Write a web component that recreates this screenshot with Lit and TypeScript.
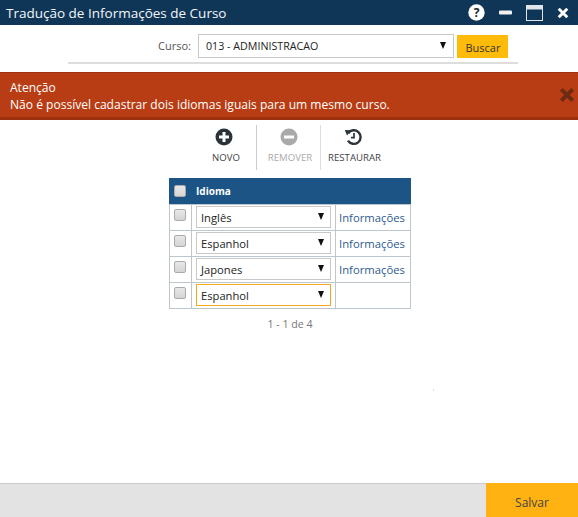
import { LitElement, html, css, svg } from "lit";
import { customElement } from "lit/decorators.js";

const FONT_ROWS = [
  { lang: "Inglês", info: true, focus: false },
  { lang: "Espanhol", info: true, focus: false },
  { lang: "Japones", info: true, focus: false },
  { lang: "Espanhol", info: false, focus: true },
];

@customElement("app-root")
export class AppRoot extends LitElement {
  static styles = css`
    :host { display: flex; flex-direction: column; width: 578px; height: 517px; background: #fff; font-family: "Open Sans", "Noto Sans", sans-serif; color: #333; overflow: hidden; }
    .title { height: 25px; flex: none; background: #0f3557; color: #fff; display: flex; align-items: center; padding: 0 9px 0 6px; box-sizing: border-box; }
    .title h1 { margin: 0; font-size: 13.5px; font-weight: 400; flex: 1; color: #f4f6f8; white-space: nowrap; }
    .winicons { display: flex; align-items: center; gap: 14px; }
    .winicons svg { display: block; }
    .form { flex: none; box-sizing: border-box; margin: 0 60px 0 68px; border-bottom: 2px solid #ddd; height: 39px; display: flex; align-items: flex-start; padding: 9px 0 0 90px; }
    .form label { font-size: 11px; color: #555; width: 40px; line-height: 23px; }
    .sel { box-sizing: border-box; border: 1px solid #c8c8c8; background: #fff; display: flex; align-items: center; justify-content: space-between; color: #222; }
    .course { width: 256px; height: 24px; padding: 0 7px 0 7px; font-size: 10.7px; }
    .arrow { width: 0; height: 0; border-left: 3.5px solid transparent; border-right: 3.5px solid transparent; border-top: 7px solid #111; flex: none; margin-top: -2px; }
    .buscar { margin-left: 3px; margin-top: 1px; width: 51px; height: 23px; padding: 2px 0 0 1px; box-sizing: border-box; background: #ffbb0a; font-size: 11px; color: #333; display: flex; align-items: center; justify-content: center; }
    .alert { margin-top: 8px; height: 48px; flex: none; box-sizing: border-box; background: #b83c14; border-top: 1px solid #9f3210; border-bottom: 3px solid #9c3110; color: #fff; padding: 6px 10px 0; font-size: 12.06px; line-height: 17px; display: flex; justify-content: space-between; }
    .alert svg { margin: 8px -7px 0 0; flex: none; }
    .toolbar { display: flex; height: 45px; margin-top: 5px; flex: none; padding-left: 193px; }
    .tool { display: flex; flex-direction: column; align-items: center; font-size: 9.6px; color: #444; gap: 5px; padding-top: 3px; box-sizing: border-box; white-space: nowrap; }
    .tool svg { display: block; }
    .tool.novo { width: 63px; }
    .tool.novo svg { margin-right: 1px; }
    .tool.novo span, .tool.rem span { margin-left: 3px; }
    .tool.rem { width: 65px; color: #aaa; border-left: 1px solid #ccc; border-right: 1px solid #ddd; }
    .tool.res { width: 67px; }
    .tool.res svg { margin-left: -3px; }
    .grid { align-self: center; margin-top: 8px; margin-left: 2px; width: 242px; flex: none; }
    .head { height: 26px; background: #1c5486; color: #fff; display: flex; align-items: center; font-size: 10px; font-weight: 700; padding-left: 5px; gap: 10px; }
    .cb { box-sizing: border-box; width: 12px; height: 12px; border: 1px solid #aaa; border-radius: 2px; background: linear-gradient(#e8e8e8, #d4d4d4); flex: none; }
    .row { display: grid; grid-template-columns: 22px 144px 1fr; height: 26px; box-sizing: border-box; border: 1px solid #bcc6cc; border-bottom: none; }
    .row:last-child { height: 27px; border-bottom: 1px solid #bcc6cc; }
    .row > div { display: flex; align-items: center; box-sizing: border-box; }
    .c1 { justify-content: center; padding: 0 1px 5px 0; border-right: 1px solid #bcc6cc; }
    .c2 { padding: 0 4px 1px; border-right: 1px solid #bcc6cc; }
    .lang { width: 135px; height: 22px; padding: 0 6px 0 4px; font-size: 11.2px; }
    .lang.focus { border-color: #f5a81c; }
    .c3 { font-size: 11.3px; color: #2e5b8e; padding-left: 3px; white-space: nowrap; }
    .pager { align-self: center; margin-top: 8px; font-size: 10.6px; color: #777; margin-left: 2px; flex: none; line-height: 14px; }
    .spacer { flex: 1; }
    .speck { width: 1px; height: 2px; background: #ddd; margin: 58px 0 0 433px; }
    .foot { height: 34px; flex: none; background: #e3e3e3; border-top: 1px solid #ccc; box-sizing: border-box; display: flex; justify-content: flex-end; }
    .salvar { width: 92px; margin-top: -1px; background: #ffb212; color: #444; font-size: 12px; display: flex; align-items: center; justify-content: center; padding-top: 4px; box-sizing: border-box; }
  `;

  private xIcon(size: number, color: string) {
    return svg`<svg width=${size} height=${size} viewBox="0 0 14 14"><path d="M2 2 L12 12 M12 2 L2 12" stroke=${color} stroke-width="3.4" fill="none"/></svg>`;
  }

  render() {
    return html`
      <div class="title">
        <h1>Tradução de Informações de Curso</h1>
        <div class="winicons">
          <svg width="17" height="17" viewBox="0 0 17 17"><circle cx="8.5" cy="8.5" r="8.2" fill="#fff"/><text x="8.5" y="13" text-anchor="middle" font-size="12" font-weight="700" font-family="Open Sans, sans-serif" fill="#222">?</text></svg>
          <svg width="13" height="5" viewBox="0 0 13 5"><rect y="0.5" width="13" height="4" rx="1" fill="#f2f2f2"/></svg>
          <svg width="17" height="16" viewBox="0 0 17 16"><rect x="0.5" y="0.5" width="16" height="15" fill="none" stroke="#dfe5ea"/><rect x="1" y="1" width="15" height="3.5" fill="#dfe5ea"/></svg>
          ${this.xIcon(12, "#fff")}
        </div>
      </div>
      <div class="form">
        <label>Curso:</label>
        <div class="sel course"><span>013 - ADMINISTRACAO</span><span class="arrow"></span></div>
        <div class="buscar">Buscar</div>
      </div>
      <div class="alert">
        <div>Atenção<br />Não é possível cadastrar dois idiomas iguais para um mesmo curso.</div>
        ${this.xIcon(16, "#6e2a12")}
      </div>
      <div class="toolbar">
        <div class="tool novo">
          <svg width="18" height="18" viewBox="0 0 18 18"><circle cx="9" cy="9" r="8.5" fill="#2b333a"/><path d="M9 4v10M4 9h10" stroke="#fff" stroke-width="3"/></svg>
          <span>NOVO</span>
        </div>
        <div class="tool rem">
          <svg width="18" height="18" viewBox="0 0 18 18"><circle cx="9" cy="9" r="8.5" fill="#aaa"/><path d="M4 9h10" stroke="#fff" stroke-width="3"/></svg>
          <span>REMOVER</span>
        </div>
        <div class="tool res">
          <svg width="18" height="18" viewBox="0 0 18 18"><path d="M4.2 5.2A6.8 6.8 0 1 1 4 12.6" fill="none" stroke="#2b333a" stroke-width="2.4"/><path d="M0.8 2 L7.2 2.2 L3 7.6Z" fill="#2b333a"/><path d="M10 5v4.6H7" fill="none" stroke="#2b333a" stroke-width="1.7"/></svg>
          <span>RESTAURAR</span>
        </div>
      </div>
      <div class="grid">
        <div class="head"><span class="cb"></span><span>Idioma</span></div>
        ${FONT_ROWS.map(
          (r) => html`<div class="row">
            <div class="c1"><span class="cb"></span></div>
            <div class="c2"><div class="sel lang ${r.focus ? "focus" : ""}"><span>${r.lang}</span><span class="arrow"></span></div></div>
            <div class="c3">${r.info ? "Informações" : ""}</div>
          </div>`
        )}
      </div>
      <div class="pager">1 - 1 de 4</div>
      <div class="spacer"><div class="speck"></div></div>
      <div class="foot"><div class="salvar">Salvar</div></div>
    `;
  }
}
